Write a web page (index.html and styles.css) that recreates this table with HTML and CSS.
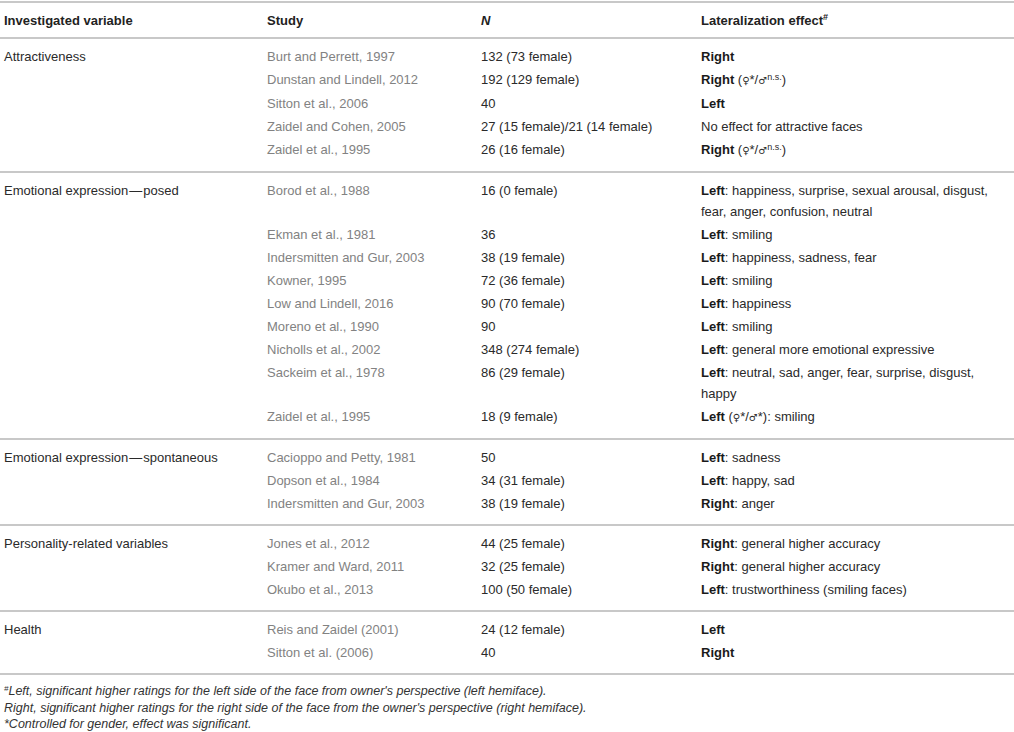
FILE: index.html
```html
<!DOCTYPE html>
<html lang="en">
<head>
    <meta charset="UTF-8" />
    <title>Lateralization effects</title>
    <link rel="stylesheet" href="styles.css">
</head>
<body>
    <table class="data-table">
        <colgroup>
            <col class="col-var">
            <col class="col-study">
            <col class="col-n">
            <col class="col-effect">
        </colgroup>
        <thead>
            <tr>
                <th>Investigated variable</th>
                <th>Study</th>
                <th><i>N</i></th>
                <th>Lateralization effect<sup>#</sup></th>
            </tr>
        </thead>
        <!-- Attractiveness -->
        <tbody>
            <tr>
                <td>Attractiveness</td>
                <td class="study">Burt and Perrett, 1997</td>
                <td>132 (73 female)</td>
                <td><b>Right</b></td>
            </tr>
            <tr>
                <td></td>
                <td class="study">Dunstan and Lindell, 2012</td>
                <td>192 (129 female)</td>
                <td><b>Right</b> (<span class="sym">♀</span>*/<span class="sym">♂</span><sup>n.s.</sup>)</td>
            </tr>
            <tr>
                <td></td>
                <td class="study">Sitton et al., 2006</td>
                <td>40</td>
                <td><b>Left</b></td>
            </tr>
            <tr>
                <td></td>
                <td class="study">Zaidel and Cohen, 2005</td>
                <td>27 (15 female)/21 (14 female)</td>
                <td>No effect for attractive faces</td>
            </tr>
            <tr>
                <td></td>
                <td class="study">Zaidel et al., 1995</td>
                <td>26 (16 female)</td>
                <td><b>Right</b> (<span class="sym">♀</span>*/<span class="sym">♂</span><sup>n.s.</sup>)</td>
            </tr>
        </tbody>
        <!-- Emotional expression, posed -->
        <tbody>
            <tr>
                <td>Emotional expression<span class="dash">—</span>posed</td>
                <td class="study">Borod et al., 1988</td>
                <td>16 (0 female)</td>
                <td><b>Left</b>: happiness, surprise, sexual arousal, disgust, fear, anger, confusion, neutral</td>
            </tr>
            <tr>
                <td></td>
                <td class="study">Ekman et al., 1981</td>
                <td>36</td>
                <td><b>Left</b>: smiling</td>
            </tr>
            <tr>
                <td></td>
                <td class="study">Indersmitten and Gur, 2003</td>
                <td>38 (19 female)</td>
                <td><b>Left</b>: happiness, sadness, fear</td>
            </tr>
            <tr>
                <td></td>
                <td class="study">Kowner, 1995</td>
                <td>72 (36 female)</td>
                <td><b>Left</b>: smiling</td>
            </tr>
            <tr>
                <td></td>
                <td class="study">Low and Lindell, 2016</td>
                <td>90 (70 female)</td>
                <td><b>Left</b>: happiness</td>
            </tr>
            <tr>
                <td></td>
                <td class="study">Moreno et al., 1990</td>
                <td>90</td>
                <td><b>Left</b>: smiling</td>
            </tr>
            <tr>
                <td></td>
                <td class="study">Nicholls et al., 2002</td>
                <td>348 (274 female)</td>
                <td><b>Left</b>: general more emotional expressive</td>
            </tr>
            <tr>
                <td></td>
                <td class="study">Sackeim et al., 1978</td>
                <td>86 (29 female)</td>
                <td><b>Left</b>: neutral, sad, anger, fear, surprise, disgust, happy</td>
            </tr>
            <tr>
                <td></td>
                <td class="study">Zaidel et al., 1995</td>
                <td>18 (9 female)</td>
                <td><b>Left</b> (<span class="sym">♀</span>*/<span class="sym">♂</span>*): smiling</td>
            </tr>
        </tbody>
        <!-- Emotional expression, spontaneous -->
        <tbody>
            <tr>
                <td>Emotional expression<span class="dash">—</span>spontaneous</td>
                <td class="study">Cacioppo and Petty, 1981</td>
                <td>50</td>
                <td><b>Left</b>: sadness</td>
            </tr>
            <tr>
                <td></td>
                <td class="study">Dopson et al., 1984</td>
                <td>34 (31 female)</td>
                <td><b>Left</b>: happy, sad</td>
            </tr>
            <tr>
                <td></td>
                <td class="study">Indersmitten and Gur, 2003</td>
                <td>38 (19 female)</td>
                <td><b>Right</b>: anger</td>
            </tr>
        </tbody>
        <!-- Personality -->
        <tbody>
            <tr>
                <td>Personality-related variables</td>
                <td class="study">Jones et al., 2012</td>
                <td>44 (25 female)</td>
                <td><b>Right</b>: general higher accuracy</td>
            </tr>
            <tr>
                <td></td>
                <td class="study">Kramer and Ward, 2011</td>
                <td>32 (25 female)</td>
                <td><b>Right</b>: general higher accuracy</td>
            </tr>
            <tr>
                <td></td>
                <td class="study">Okubo et al., 2013</td>
                <td>100 (50 female)</td>
                <td><b>Left</b>: trustworthiness (smiling faces)</td>
            </tr>
        </tbody>
        <!-- Health -->
        <tbody>
            <tr>
                <td>Health</td>
                <td class="study">Reis and Zaidel (2001)</td>
                <td>24 (12 female)</td>
                <td><b>Left</b></td>
            </tr>
            <tr>
                <td></td>
                <td class="study">Sitton et al. (2006)</td>
                <td>40</td>
                <td><b>Right</b></td>
            </tr>
        </tbody>
    </table>

    <div class="notes">
        <p><sup>#</sup>Left, significant higher ratings for the left side of the face from owner's perspective (left hemiface).</p>
        <p>Right, significant higher ratings for the right side of the face from the owner's perspective (right hemiface).</p>
        <p>*Controlled for gender, effect was significant.</p>
    </div>
</body>
</html>
```

FILE: styles.css
```css
body {
    margin: 0;
    padding: 0;
    background: #ffffff;
    font-family: "Liberation Sans", Arial, sans-serif;
    color: #2a2a2a;
}
.data-table {
    width: 1014px;
    margin-top: 1px;
    border-collapse: collapse;
    font-size: 13px;
    table-layout: fixed;
}
.col-var { width: 263px; }
.col-study { width: 214px; }
.col-n { width: 220px; }
.col-effect { width: 317px; }
.data-table thead tr {
    border-top: 2px solid #c8c8c8;
    border-bottom: 2px solid #c8c8c8;
}
.data-table th {
    text-align: left;
    font-weight: bold;
    color: #222;
    padding: 8px 4px 7px 4px;
    line-height: 19px;
}
.data-table th sup {
    font-size: 9px;
    vertical-align: 5px;
    line-height: 0;
}
.data-table tbody {
    border-bottom: 2px solid #c8c8c8;
}
.data-table td {
    vertical-align: top;
    padding: 1px 4px;
    line-height: 21px;
}
.data-table tbody tr:first-child td {
    padding-top: 7px;
}
.data-table tbody tr:last-child td {
    padding-bottom: 10px;
}
.data-table td.study {
    color: #828282;
}
.data-table td b {
    color: #1a1a1a;
}
.dash {
    margin: 0 1px;
}
.sym {
    font-family: "DejaVu Sans", sans-serif;
    font-size: 10px;
}
.data-table td sup {
    font-size: 9px;
    vertical-align: 4px;
    line-height: 0;
}
.notes {
    padding: 8px 4px 0 4px;
    font-size: 12.5px;
    font-style: italic;
    color: #333;
}
.notes p {
    margin: 0;
    line-height: 16.5px;
}
.notes sup {
    font-size: 8px;
    vertical-align: 4px;
    line-height: 0;
}
```
